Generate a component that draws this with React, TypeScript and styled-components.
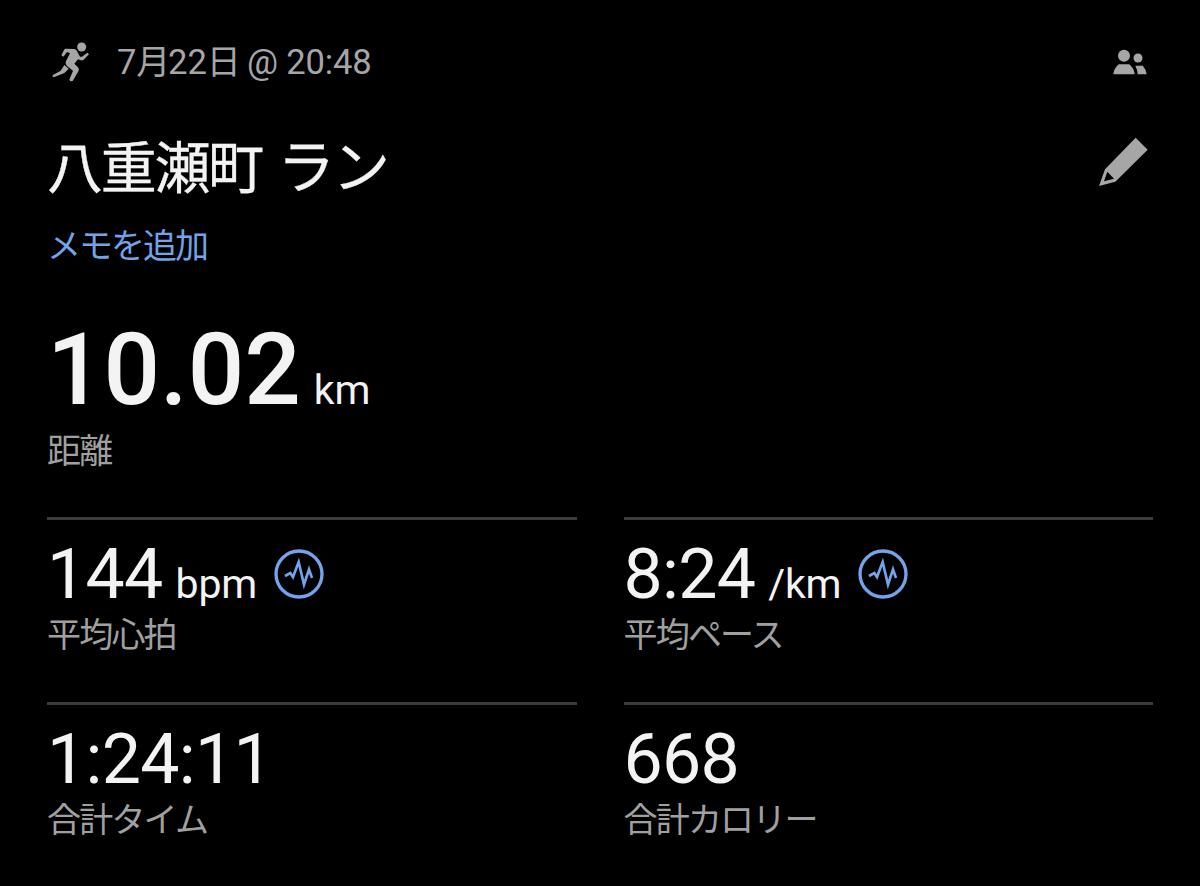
import React, { memo } from 'react'
import styled, { createGlobalStyle } from 'styled-components'

interface Metric {
	value: string
	unit?: string
	label: string
	chart?: boolean
}

const metrics: Metric[] = [
	{ value: '144', unit: 'bpm', label: '平均心拍', chart: true },
	{ value: '8:24', unit: '/km', label: '平均ペース', chart: true },
	{ value: '1:24:11', label: '合計タイム' },
	{ value: '668', label: '合計カロリー' },
]

const RunnerIcon: React.FC = () => (
	<svg width="50" height="50" viewBox="0 0 150 150">
		<circle cx="110" cy="36" r="13.5" fill="#a6a6a6" />
		<path
			d="M62 41 L88 42 Q94 43 97 50 L105 65 L111 65 L127 53 L132 58 L115 75 Q112 77 108 76 L99 73 L88 86 L99 97 Q103 101 101 107 L83 138 L76 139 L73 134 L84 107 L65 92 Q59 86 63 78 L75 55 L66 51 L55 65 L49 61 L57 45 Q59 41 62 41 Z"
			fill="#a6a6a6"
		/>
		<path
			d="M58 90 L71 101 L61 112 Q58 115 53 116 L26 127 L22 124 L24 120 L47 107 Z"
			fill="#a6a6a6"
		/>
	</svg>
)

const PeopleIcon: React.FC = () => (
	<svg width="34" height="26" viewBox="0 0 102 78">
		<g fill="#a6a6a6">
			<circle cx="33" cy="20" r="18" />
			<circle cx="75" cy="27" r="13.5" />
			<path d="M1 76 Q2 59 17 46 L49 46 Q64 59 65 76 Z" />
			<path d="M67 50 L89 50 Q99 60 101 76 L74 76 Q73 61 67 50 Z" />
		</g>
	</svg>
)

const PencilIcon: React.FC = () => (
	<svg width="50" height="50" viewBox="0 0 150 150">
		<path
			fillRule="evenodd"
			d="M113 2 L149 38 L52 134 L3 147 L21 97 Z M28 104 L18 133 L48 125 Z"
			fill="#a6a6a6"
		/>
	</svg>
)

const ChartIcon: React.FC = () => (
	<svg width="50" height="50" viewBox="0 0 150 150">
		<g fill="none" stroke="#73a3e8">
			<circle cx="75" cy="75" r="69" strokeWidth="10" />
			<path
				d="M33 81 L49 72 L57 84 L74 39 L90 107 L105 61 L114 87"
				strokeWidth="8"
			/>
		</g>
	</svg>
)

const App: React.FC = memo(function App() {
	return (
		<Page>
			<GlobalStyle />
			<Meta>
				<RunnerIcon />
				<DateText>
					7<Kanji>月</Kanji>22<Kanji>日</Kanji> @ 20:48
				</DateText>
				<PeopleIcon />
			</Meta>
			<TitleRow>
				<Title>
					八重瀬町 <Kana>ラン</Kana>
				</Title>
				<PencilIcon />
			</TitleRow>
			<AddNote>メモを追加</AddNote>
			<Distance>
				<DistanceValue>10.02</DistanceValue>
				<Unit>km</Unit>
			</Distance>
			<Label>距離</Label>
			<MetricGrid>
				{metrics.map(metric => (
					<MetricCell key={metric.label}>
						<ValueRow>
							<Value>{metric.value}</Value>
							{metric.unit && <Unit>{metric.unit}</Unit>}
							{metric.chart && (
								<ChartSlot>
									<ChartIcon />
								</ChartSlot>
							)}
						</ValueRow>
						<Label>{metric.label}</Label>
					</MetricCell>
				))}
			</MetricGrid>
		</Page>
	)
})

export default App

const GlobalStyle = createGlobalStyle`
	body {
		margin: 0;
		background: #000;
	}
`

const Page = styled.div`
	box-sizing: border-box;
	width: 1200px;
	height: 886px;
	padding: 35px 47px 0;
	overflow: hidden;
	background: #000;
	color: #f3f3f3;
	font-family: Roboto, 'Noto Sans CJK JP', sans-serif;
`

const Meta = styled.div`
	display: flex;
	align-items: center;
	height: 54px;
	padding-right: 6px;

	svg {
		flex: none;
	}

	svg:first-child {
		align-self: flex-start;
		margin-left: -2px;
	}
`

const DateText = styled.div`
	flex: 1;
	margin-left: 22px;
	color: #a6a6a6;
	font-size: 34.6px;
	line-height: 55px;
	letter-spacing: -0.15px;
	white-space: nowrap;
`

const Kanji = styled.span`
	font-size: 34px;
	letter-spacing: -2.2px;
`

const TitleRow = styled.div`
	display: flex;
	justify-content: space-between;
	height: 80px;
	margin-top: 40px;
	padding-right: 5px;

	svg {
		margin-top: 8px;
	}
`

const Title = styled.h1`
	margin: 0;
	font-size: 56px;
	font-weight: 400;
	line-height: 80px;
	letter-spacing: -2.3px;
	-webkit-text-stroke: 0.3px currentColor;
`

const Kana = styled.span`
	margin-left: 4px;
	font-size: 57.5px;
`

const AddNote = styled.div`
	margin-top: 13px;
	color: #73a3e8;
	font-size: 34px;
	line-height: 48px;
	letter-spacing: -2px;
`

const Distance = styled.div`
	display: flex;
	align-items: baseline;
	height: 120px;
	margin-top: 40px;
	line-height: 120px;
`

const DistanceValue = styled.span`
	font-size: 99.5px;
	font-weight: 500;
`

const Unit = styled.span`
	margin-left: 13px;
	font-size: 41px;
	letter-spacing: -0.2px;
`

const Label = styled.div`
	margin-top: -3px;
	color: #a0a0a0;
	font-size: 34px;
	line-height: 48px;
	letter-spacing: -1.8px;
`

const MetricGrid = styled.div`
	display: grid;
	grid-template-columns: 1fr 1fr;
	column-gap: 47px;
	margin-top: 42px;
`

const MetricCell = styled.div`
	box-sizing: border-box;
	height: 184.5px;
	padding-top: 9px;
	border-top: 3px solid #3b3b3b;
`

const ValueRow = styled.div`
	display: flex;
	align-items: baseline;
	height: 85px;
	line-height: 90px;
`

const Value = styled.span`
	font-size: 69.8px;
	letter-spacing: -0.7px;
`

const ChartSlot = styled.span`
	align-self: flex-start;
	height: 50px;
	margin-top: 20px;
	margin-left: 17px;

	svg {
		display: block;
	}
`
